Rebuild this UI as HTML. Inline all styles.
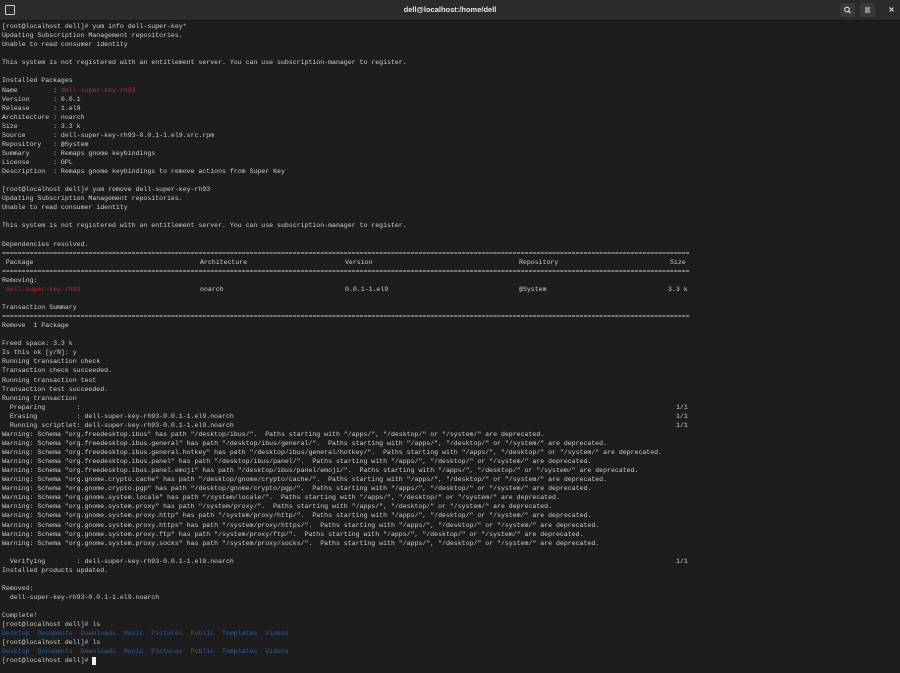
<!DOCTYPE html>
<html><head><meta charset="utf-8"><style>
html,body{margin:0;padding:0;width:900px;height:673px;overflow:hidden;background:#1d1d1d;}
.tb{position:absolute;left:0;top:0;width:900px;height:20px;background:#2b2b2b;border-bottom:1px solid #161616;}
.title{position:absolute;left:0;width:900px;top:5px;text-align:center;color:#e8e8e8;font:bold 7.5px "Liberation Sans",sans-serif;}
.btn{position:absolute;top:3px;width:15px;height:14px;background:#3a3a3a;border-radius:3px;}
.t{position:absolute;left:2px;top:22.1px;font-family:"Liberation Mono",monospace;font-size:6.55px;color:#cfcfcf;}
.t div{height:9.07px;line-height:9.07px;white-space:pre;position:relative;}
.t span.a{position:absolute;top:0}
.red{color:#b0303a}
.blu{color:#2f5f9e}
.cur{display:inline-block;width:4px;height:8px;background:#eee;vertical-align:middle}
</style></head><body>
<div class="tb">
 <div style="position:absolute;left:5px;top:5px;width:8px;height:8px;border:1px solid #ccc;border-radius:1px;"></div>
 <div class="title">dell@localhost:/home/dell</div>
 <div class="btn" style="left:840px"><svg width="15" height="14"><circle cx="7" cy="6.5" r="2.3" fill="none" stroke="#ddd" stroke-width="1.1"/><line x1="8.7" y1="8.2" x2="10.5" y2="10" stroke="#ddd" stroke-width="1.2"/></svg></div>
 <div class="btn" style="left:860px"><svg width="15" height="14"><path d="M5 5h5M5 7h5M5 9h5" stroke="#ddd" stroke-width="1"/></svg></div>
 <svg style="position:absolute;left:888px;top:6px" width="8" height="8"><path d="M1.5 1.5l4 4M5.5 1.5l-4 4" stroke="#ddd" stroke-width="1.1"/></svg>
</div>
<div class="t">
<div>[root@localhost dell]# yum info dell-super-key*</div>
<div>Updating Subscription Management repositories.</div>
<div>Unable to read consumer identity</div>
<div> </div>
<div>This system is not registered with an entitlement server. You can use subscription-manager to register.</div>
<div> </div>
<div>Installed Packages</div>
<div>Name         : <span class="red">dell-super-key-rh93</span></div>
<div>Version      : 0.0.1</div>
<div>Release      : 1.el9</div>
<div>Architecture : noarch</div>
<div>Size         : 3.3 k</div>
<div>Source       : dell-super-key-rh93-0.0.1-1.el9.src.rpm</div>
<div>Repository   : @System</div>
<div>Summary      : Remaps gnome keybindings</div>
<div>License      : GPL</div>
<div>Description  : Remaps gnome keybindings to remove actions from Super Key</div>
<div> </div>
<div>[root@localhost dell]# yum remove dell-super-key-rh93</div>
<div>Updating Subscription Management repositories.</div>
<div>Unable to read consumer identity</div>
<div> </div>
<div>This system is not registered with an entitlement server. You can use subscription-manager to register.</div>
<div> </div>
<div>Dependencies resolved.</div>
<div>===============================================================================================================================================================================</div>
<div> Package<span class="a" style="left:198px">Architecture</span><span class="a" style="left:343px">Version</span><span class="a" style="left:517px">Repository</span><span class="a" style="left:668px">Size</span></div>
<div>===============================================================================================================================================================================</div>
<div>Removing:</div>
<div> <span class="red">dell-super-key-rh93</span><span class="a" style="left:198px">noarch</span><span class="a" style="left:343px">0.0.1-1.el9</span><span class="a" style="left:517px">@System</span><span class="a" style="left:666px">3.3 k</span></div>
<div> </div>
<div>Transaction Summary</div>
<div>===============================================================================================================================================================================</div>
<div>Remove  1 Package</div>
<div> </div>
<div>Freed space: 3.3 k</div>
<div>Is this ok [y/N]: y</div>
<div>Running transaction check</div>
<div>Transaction check succeeded.</div>
<div>Running transaction test</div>
<div>Transaction test succeeded.</div>
<div>Running transaction</div>
<div>  Preparing        :<span class="a" style="left:674px">1/1</span></div>
<div>  Erasing          : dell-super-key-rh93-0.0.1-1.el9.noarch<span class="a" style="left:674px">1/1</span></div>
<div>  Running scriptlet: dell-super-key-rh93-0.0.1-1.el9.noarch<span class="a" style="left:674px">1/1</span></div>
<div>Warning: Schema "org.freedesktop.ibus" has path "/desktop/ibus/".  Paths starting with "/apps/", "/desktop/" or "/system/" are deprecated.</div>
<div>Warning: Schema "org.freedesktop.ibus.general" has path "/desktop/ibus/general/".  Paths starting with "/apps/", "/desktop/" or "/system/" are deprecated.</div>
<div>Warning: Schema "org.freedesktop.ibus.general.hotkey" has path "/desktop/ibus/general/hotkey/".  Paths starting with "/apps/", "/desktop/" or "/system/" are deprecated.</div>
<div>Warning: Schema "org.freedesktop.ibus.panel" has path "/desktop/ibus/panel/".  Paths starting with "/apps/", "/desktop/" or "/system/" are deprecated.</div>
<div>Warning: Schema "org.freedesktop.ibus.panel.emoji" has path "/desktop/ibus/panel/emoji/".  Paths starting with "/apps/", "/desktop/" or "/system/" are deprecated.</div>
<div>Warning: Schema "org.gnome.crypto.cache" has path "/desktop/gnome/crypto/cache/".  Paths starting with "/apps/", "/desktop/" or "/system/" are deprecated.</div>
<div>Warning: Schema "org.gnome.crypto.pgp" has path "/desktop/gnome/crypto/pgp/".  Paths starting with "/apps/", "/desktop/" or "/system/" are deprecated.</div>
<div>Warning: Schema "org.gnome.system.locale" has path "/system/locale/".  Paths starting with "/apps/", "/desktop/" or "/system/" are deprecated.</div>
<div>Warning: Schema "org.gnome.system.proxy" has path "/system/proxy/".  Paths starting with "/apps/", "/desktop/" or "/system/" are deprecated.</div>
<div>Warning: Schema "org.gnome.system.proxy.http" has path "/system/proxy/http/".  Paths starting with "/apps/", "/desktop/" or "/system/" are deprecated.</div>
<div>Warning: Schema "org.gnome.system.proxy.https" has path "/system/proxy/https/".  Paths starting with "/apps/", "/desktop/" or "/system/" are deprecated.</div>
<div>Warning: Schema "org.gnome.system.proxy.ftp" has path "/system/proxy/ftp/".  Paths starting with "/apps/", "/desktop/" or "/system/" are deprecated.</div>
<div>Warning: Schema "org.gnome.system.proxy.socks" has path "/system/proxy/socks/".  Paths starting with "/apps/", "/desktop/" or "/system/" are deprecated.</div>
<div> </div>
<div>  Verifying        : dell-super-key-rh93-0.0.1-1.el9.noarch<span class="a" style="left:674px">1/1</span></div>
<div>Installed products updated.</div>
<div> </div>
<div>Removed:</div>
<div>  dell-super-key-rh93-0.0.1-1.el9.noarch</div>
<div> </div>
<div>Complete!</div>
<div>[root@localhost dell]# ls</div>
<div class="blu">Desktop  Documents  Downloads  Music  Pictures  Public  Templates  Videos</div>
<div>[root@localhost dell]# ls</div>
<div class="blu">Desktop  Documents  Downloads  Music  Pictures  Public  Templates  Videos</div>
<div>[root@localhost dell]# <span class="cur"></span></div>
</div>
</body></html>
